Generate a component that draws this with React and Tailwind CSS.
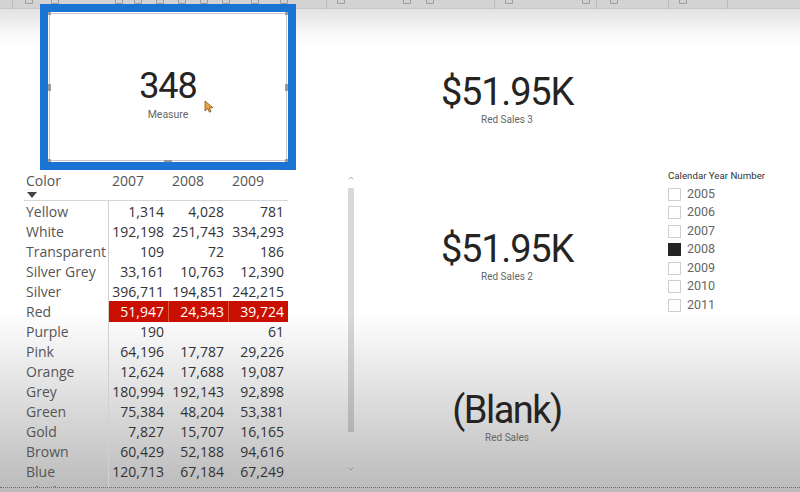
import React from "react";
import { ChevronUp, ChevronDown } from "lucide-react";

const rows = [
  ["Yellow", "1,314", "4,028", "781"],
  ["White", "192,198", "251,743", "334,293"],
  ["Transparent", "109", "72", "186"],
  ["Silver Grey", "33,161", "10,763", "12,390"],
  ["Silver", "396,711", "194,851", "242,215"],
  ["Red", "51,947", "24,343", "39,724"],
  ["Purple", "190", "", "61"],
  ["Pink", "64,196", "17,787", "29,226"],
  ["Orange", "12,624", "17,688", "19,087"],
  ["Grey", "180,994", "192,143", "92,898"],
  ["Green", "75,384", "48,204", "53,381"],
  ["Gold", "7,827", "15,707", "16,165"],
  ["Brown", "60,429", "52,188", "94,616"],
  ["Blue", "120,713", "67,184", "67,249"],
  ["Black", "127,314", "86,771", "107,141"],
];

const years = ["2005", "2006", "2007", "2008", "2009", "2010", "2011"];

const toolIcons = [25, 51, 115, 134, 156, 178, 200, 222, 251, 280, 337, 403, 426, 505, 582, 610, 679];
const toolDividers = [12, 326, 494, 596, 668, 727];

function Toolbar() {
  return (
    <div className="absolute top-0 left-0 w-[800px] h-[9px] bg-[#d3d3d3] border-b border-[#c6c6c6]">
      {toolIcons.map((x) => (
        <div
          key={x}
          className="absolute top-[-2px] w-[8px] h-[6px] border border-[#9c9c9c] rounded-[1px] bg-[#d0d0d0]"
          style={{ left: x }}
        />
      ))}
      {toolDividers.map((x) => (
        <div key={x} className="absolute top-0 h-[9px] w-px bg-[#bcbcbc]" style={{ left: x }} />
      ))}
    </div>
  );
}

function Cursor() {
  return (
    <svg className="absolute left-[156px] top-[88px]" width="10" height="13" viewBox="0 0 10 13">
      <path d="M1 1 L1 11 L3.6 8.6 L5.4 12.2 L7 11.4 L5.3 7.9 L8.8 7.7 Z" fill="#eda43a" stroke="#7a5418" strokeWidth="0.8" />
    </svg>
  );
}

function SelectedCard() {
  return (
    <div className="ml-[40px] mt-[4px] w-[256px] h-[166px] border-[8px] border-[#1b73d3] bg-white relative">
      <div className="absolute inset-[1px] border border-[#c9c9c9]" />
      {/* handles */}
      <div className="absolute left-[0px] top-[72px] w-[3px] h-[7px] bg-[#9a9a9a]" />
      <div className="absolute right-[0px] top-[72px] w-[3px] h-[7px] bg-[#9a9a9a]" />
      <div className="absolute left-[116px] bottom-[0px] w-[8px] h-[2px] bg-[#9a9a9a]" />
      <div className="absolute left-[0px] top-[0px] w-[3px] h-[3px] bg-[#9a9a9a]" />
      <div className="absolute right-[0px] top-[0px] w-[3px] h-[3px] bg-[#9a9a9a]" />
      <div className="absolute left-[0px] bottom-[0px] w-[3px] h-[3px] bg-[#9a9a9a]" />
      <div className="absolute right-[0px] bottom-[0px] w-[3px] h-[3px] bg-[#9a9a9a]" />
      <div className="flex flex-col items-center pt-[55px] font-['Roboto',sans-serif]">
        <div className="text-[36px] leading-[38px] tracking-[-1px] text-[#252423]">348</div>
        <div className="text-[10.5px] leading-[14px] mt-[3px] text-[#666666]">Measure</div>
      </div>
      <Cursor />
      <div className="absolute left-[222px] bottom-[-12px] text-[9px] leading-[9px] text-[#888] tracking-[1px]">···</div>
    </div>
  );
}

function Table() {
  return (
    <div className="ml-[24px] w-[264px] font-['Open_Sans',sans-serif] text-[14px]">
      <div className="h-[30px] border-b border-[#d6d6d6] grid grid-cols-[84px_60px_60px_60px] text-[#555555]">
        <div className="pl-[2px]">
          <div className="leading-[20px]">Color</div>
          <svg className="ml-[1px] mt-[1px]" width="10" height="6" viewBox="0 0 10 6">
            <path d="M0 0 L10 0 L5 6 Z" fill="#444" />
          </svg>
        </div>
        <div className="pl-[4px] leading-[20px]">2007</div>
        <div className="pl-[4px] leading-[20px]">2008</div>
        <div className="pl-[4px] leading-[20px]">2009</div>
      </div>
      {rows.map(([label, a, b, c]) => {
        const red = label === "Red";
        const cell = red ? "bg-[#c90f00] text-white" : "text-[#333333]";
        return (
          <div key={label} className="grid grid-cols-[84px_60px_60px_60px] h-[20px] leading-[21px]">
            <div className="pl-[2px] text-[#555555] whitespace-nowrap">{label}</div>
            <div className={`text-right pr-[4px] border-l border-[#d0d0d0] ${cell}`}>{a}</div>
            <div className={`text-right pr-[4px] ${red ? "border-l border-[#e0573f]" : ""} ${cell}`}>{b}</div>
            <div className={`text-right pr-[4px] ${red ? "border-l border-[#e0573f]" : ""} ${cell}`}>{c}</div>
          </div>
        );
      })}
    </div>
  );
}

function Scrollbar() {
  return (
    <div className="ml-[59px] w-[7px] flex flex-col items-center">
      <ChevronUp size={8} strokeWidth={2} className="mt-[3px] text-[#8a8a8a]" />
      <div className="mt-[6px] w-[6px] h-[244px] bg-black/15" />
      <div className="w-[6px] h-[32px]" />
      <ChevronDown size={8} strokeWidth={2} className="mt-[1px] text-[#7a7a7a]" />
    </div>
  );
}

function BigCard({ value, label, top, tracking }) {
  return (
    <div className="flex flex-col items-center font-['Roboto',sans-serif]" style={{ marginTop: top }}>
      <div className={`text-[38px] leading-[40px] text-[#252423] ${tracking}`}>{value}</div>
      <div className="text-[10px] leading-[14px] mt-[1px] text-[#666666]">{label}</div>
    </div>
  );
}

function Slicer() {
  return (
    <div className="pl-[14px] pt-[170px] font-['Roboto',sans-serif]">
      <div className="text-[9.7px] leading-[12px] text-[#333333]">Calendar Year Number</div>
      <div className="mt-[3px]">
        {years.map((y) => (
          <div key={y} className="h-[18.5px] flex items-center">
            <div
              className={`w-[13px] h-[13px] border ${
                y === "2008" ? "bg-[#252423] border-[#252423]" : "bg-white border-[#cfcfcf]"
              }`}
            />
            <span className="ml-[6px] text-[12.5px] text-[#666666]">{y}</span>
          </div>
        ))}
      </div>
    </div>
  );
}

export default function App() {
  return (
    <div className="relative w-[800px] h-[492px] overflow-hidden bg-[linear-gradient(to_bottom,#e2e2e2_9px,#f7f7f7_32px,#ffffff_48px,#ffffff_312px,#bcbcbc_487px,#bababa_100%)]">
      <Toolbar />
      <div className="relative flex h-[487px] overflow-hidden">
        {/* left: card + matrix */}
        <div className="w-[360px] shrink-0">
          <SelectedCard />
          <div className="mt-[1px] h-[316px] overflow-hidden flex">
            <Table />
            <Scrollbar />
          </div>
        </div>

        {/* middle: cards */}
        <div className="w-[294px] shrink-0 flex flex-col">
          <BigCard value="$51.95K" label="Red Sales 3" top={72} tracking="tracking-[-1.2px]" />
          <BigCard value="$51.95K" label="Red Sales 2" top={102} tracking="tracking-[-1.2px]" />
          <BigCard value="(Blank)" label="Red Sales" top={106} tracking="tracking-[-1.5px]" />
        </div>

        {/* right: slicer */}
        <Slicer />
      </div>
      <div className="absolute left-0 top-[487px] w-[800px] border-t border-dotted border-[#6f6f6f]" />
    </div>
  );
}
